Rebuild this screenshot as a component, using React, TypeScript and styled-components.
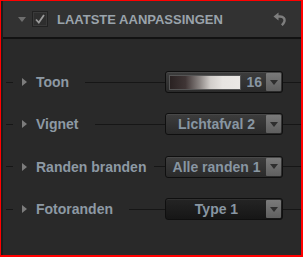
import React from "react";
import styled, { createGlobalStyle } from "styled-components";

const Global = createGlobalStyle`
  html, body { margin: 0; padding: 0; background: #2a2a2a; }
  body { font-family: "Liberation Sans", Arial, sans-serif; }
`;

const Panel = styled.div`
  width: 303px;
  height: 257px;
  box-sizing: border-box;
  border-style: solid;
  border-color: #ff0000;
  border-width: 1px 2px 2px 1px;
  background: #292929;
  display: flex;
  flex-direction: column;
`;

const Inner = styled.div`
  flex: 1;
  display: flex;
  flex-direction: column;
  border-left: 2px solid #1d1d1d;
`;

const Header = styled.div`
  height: 36px;
  flex: none;
  background: #323232;
  border-bottom: 2px solid #121212;
  display: flex;
  align-items: center;
`;

const Caret = styled.span`
  width: 0;
  height: 0;
  margin-left: 15px;
  border-left: 4.5px solid transparent;
  border-right: 4.5px solid transparent;
  border-top: 5px solid #6e6e6e;
`;

const Check = styled.span`
  margin-left: 6px;
  width: 16px;
  height: 16px;
  box-sizing: border-box;
  border: 1px solid #222;
  box-shadow: inset 0 0 0 1px #3a3a3a;
  background: #2e2e2e;
  display: flex;
  align-items: center;
  justify-content: center;
`;

const Title = styled.span`
  margin-left: 9px;
  font-size: 13px;
  font-weight: bold;
  color: #9aa3ab;
  letter-spacing: 0;
  flex: 1;
`;

const UndoWrap = styled.span`
  margin-right: 14px;
  display: flex;
`;

const Body = styled.div`
  flex: 1;
  display: flex;
  flex-direction: column;
  gap: 20.4px;
  padding-top: 32px;
`;

const Row = styled.div`
  height: 22px;
  display: flex;
  align-items: center;
`;

const Line = styled.span<{ $w?: number; $ml?: number }>`
  height: 1px;
  background: #161616;
  flex: ${(p) => (p.$w ? "none" : "1")};
  width: ${(p) => (p.$w ? `${p.$w}px` : "auto")};
  margin-left: ${(p) => p.$ml ?? 0}px;
`;

const Arrow = styled.span`
  margin-left: 9px;
  width: 0;
  height: 0;
  border-top: 4.5px solid transparent;
  border-bottom: 4.5px solid transparent;
  border-left: 5px solid #7c7c7c;
`;

const Label = styled.span<{ $gap?: number }>`
  margin-left: 9px;
  margin-right: ${(p) => p.$gap ?? 16}px;
  font-size: 14px;
  font-weight: bold;
  color: #8d99a4;
  white-space: nowrap;
`;

const Field = styled.div<{ $dark?: boolean }>`
  width: 118px;
  height: 22px;
  box-sizing: border-box;
  flex: none;
  border: 1px solid #0f0f0f;
  border-radius: 3px;
  background: ${(p) =>
    p.$dark
      ? "linear-gradient(#242424, #161616)"
      : "linear-gradient(#3d3d3d, #2a2a2a)"};
  box-shadow: inset 0 1px 0 rgba(255, 255, 255, 0.06);
  display: flex;
  align-items: center;
  padding: 1px;
`;

const Value = styled.span<{ $right?: boolean }>`
  flex: 1;
  text-align: ${(p) => (p.$right ? "right" : "center")};
  padding-right: ${(p) => (p.$right ? "4px" : "0")};
  font-size: 14px;
  font-weight: bold;
  color: #8896a2;
  white-space: nowrap;
`;

const Swatch = styled.span`
  width: 72px;
  height: 15px;
  margin-left: 2px;
  box-sizing: border-box;
  border: 1px solid #555;
  background: linear-gradient(
    90deg,
    #2a2222 0%,
    #3f3535 22%,
    #8a8482 42%,
    #d2cecb 58%,
    #e7e4e1 75%,
    #ebe8e5 100%
  );
`;

const DropButton = styled.span`
  width: 15px;
  height: 18px;
  flex: none;
  background: linear-gradient(#7a7a7a, #5f5f5f);
  border-radius: 1px;
  display: flex;
  align-items: center;
  justify-content: center;
  &::after {
    content: "";
    border-left: 4px solid transparent;
    border-right: 4px solid transparent;
    border-top: 5px solid #2e2e2e;
  }
`;

const CheckIcon = () => (
  <svg width="12" height="12" viewBox="0 0 12 12">
    <path d="M2 6.5 L4.8 9.5 L10 2" stroke="#9a9a9a" strokeWidth="1.8" fill="none" />
  </svg>
);

const UndoIcon = () => (
  <svg width="14" height="14" viewBox="0 0 14 14">
    <path d="M0.5 4.5 L5.5 0.5 V8.5 Z" fill="#7e7e7e" />
    <path
      d="M4.5 4.5 H7 C10.5 4.5 12.2 7 11.3 9.6 C10.8 11.2 9.8 12.3 8.8 13.2"
      stroke="#7e7e7e"
      strokeWidth="2.4"
      fill="none"
    />
  </svg>
);

type RowData = {
  label: string;
  gap?: number;
  kind: "tone" | "select";
  value: string;
  dark?: boolean;
};

const rows: RowData[] = [
  { label: "Toon", kind: "tone", value: "16" },
  { label: "Vignet", kind: "select", value: "Lichtafval 2" },
  { label: "Randen branden", kind: "select", value: "Alle randen 1", gap: 8 },
  { label: "Fotoranden", kind: "select", value: "Type 1", dark: true },
];

export default function App() {
  return (
    <>
      <Global />
      <Panel>
        <Inner>
          <Header>
            <Caret />
            <Check>
              <CheckIcon />
            </Check>
            <Title>LAATSTE AANPASSINGEN</Title>
            <UndoWrap>
              <UndoIcon />
            </UndoWrap>
          </Header>
          <Body>
            {rows.map((r) => (
              <Row key={r.label}>
                <Line $w={7} $ml={3} />
                <Arrow />
                <Label $gap={r.gap}>{r.label}</Label>
                <Line />
                <Field $dark={r.dark}>
                  {r.kind === "tone" ? (
                    <>
                      <Swatch />
                      <Value $right>{r.value}</Value>
                    </>
                  ) : (
                    <Value>{r.value}</Value>
                  )}
                  <DropButton />
                </Field>
                <Line $w={18} />
              </Row>
            ))}
          </Body>
        </Inner>
      </Panel>
    </>
  );
}
